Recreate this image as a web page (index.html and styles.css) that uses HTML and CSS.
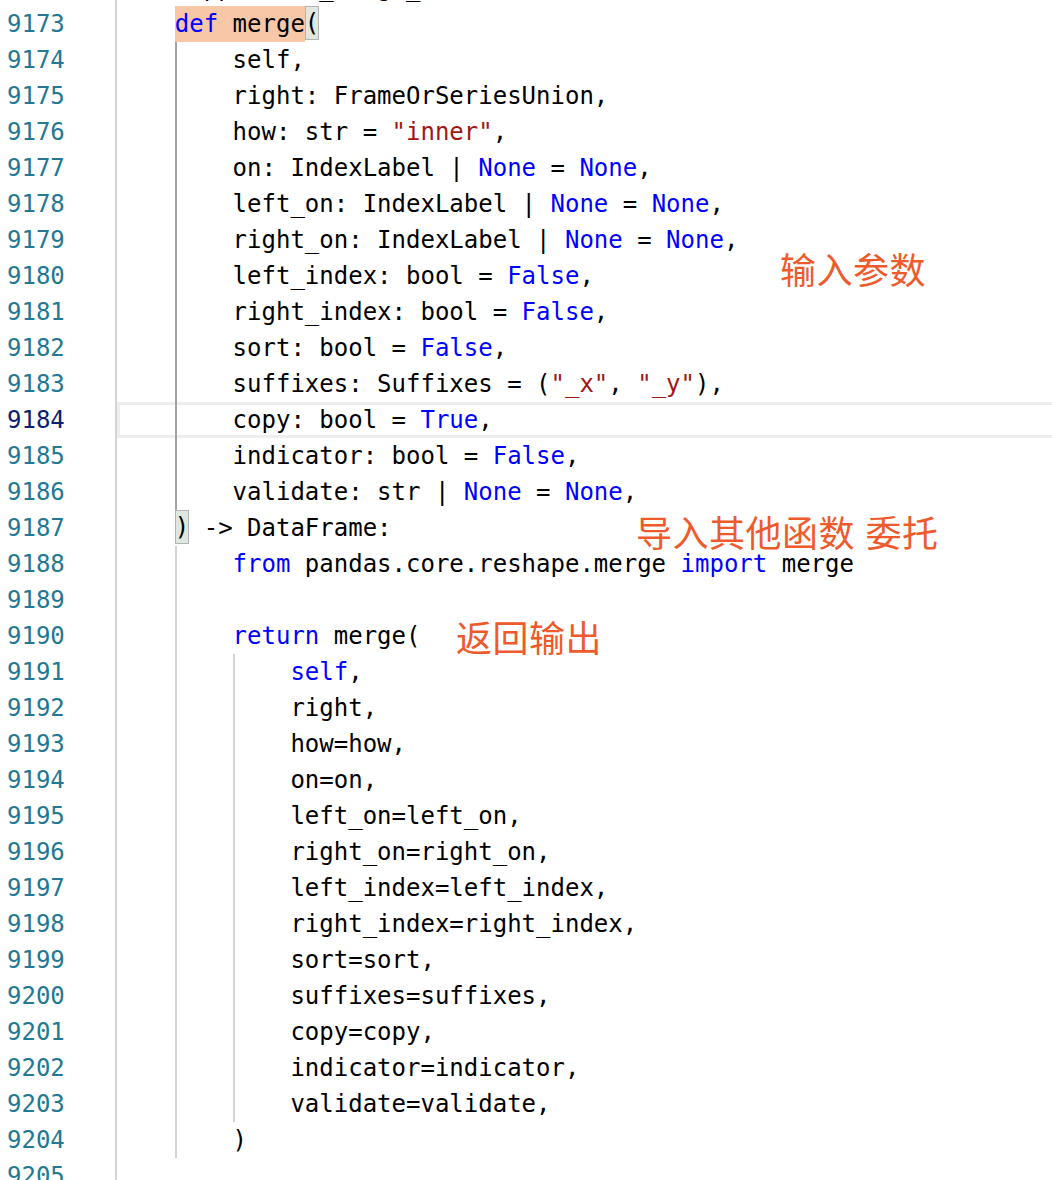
FILE: index.html
```html
<!DOCTYPE html>
<html lang="zh">
<head>
    <meta charset="UTF-8">
    <meta name="viewport" content="width=device-width, initial-scale=1.0">
    <title>merge</title>
    <link rel="stylesheet" href="styles.css">
</head>
<body>

<div class="screen">
    <div class="editor">
        <div class="line"><div class="num">9172</div><div class="code"><span class="ind"></span>@Appender(_merge_doc, indents=2)</div></div>
        <div class="line"><div class="num">9173</div><div class="code"><span class="ind"></span><span class="match"><span class="kw">def</span> merge</span><span class="bracket">(</span></div></div>
        <div class="line"><div class="num">9174</div><div class="code"><span class="ind"></span><span class="ind active"></span>self,</div></div>
        <div class="line"><div class="num">9175</div><div class="code"><span class="ind"></span><span class="ind active"></span>right: FrameOrSeriesUnion,</div></div>
        <div class="line"><div class="num">9176</div><div class="code"><span class="ind"></span><span class="ind active"></span>how: str = <span class="str">"inner"</span>,</div></div>
        <div class="line"><div class="num">9177</div><div class="code"><span class="ind"></span><span class="ind active"></span>on: IndexLabel | <span class="kw">None</span> = <span class="kw">None</span>,</div></div>
        <div class="line"><div class="num">9178</div><div class="code"><span class="ind"></span><span class="ind active"></span>left_on: IndexLabel | <span class="kw">None</span> = <span class="kw">None</span>,</div></div>
        <div class="line"><div class="num">9179</div><div class="code"><span class="ind"></span><span class="ind active"></span>right_on: IndexLabel | <span class="kw">None</span> = <span class="kw">None</span>,</div></div>
        <div class="line"><div class="num">9180</div><div class="code"><span class="ind"></span><span class="ind active"></span>left_index: bool = <span class="kw">False</span>,</div></div>
        <div class="line"><div class="num">9181</div><div class="code"><span class="ind"></span><span class="ind active"></span>right_index: bool = <span class="kw">False</span>,</div></div>
        <div class="line"><div class="num">9182</div><div class="code"><span class="ind"></span><span class="ind active"></span>sort: bool = <span class="kw">False</span>,</div></div>
        <div class="line"><div class="num">9183</div><div class="code"><span class="ind"></span><span class="ind active"></span>suffixes: Suffixes = (<span class="str">"_x"</span>, <span class="str">"_y"</span>),</div></div>
        <div class="line current"><div class="num">9184</div><div class="code"><span class="ind"></span><span class="ind active"></span>copy: bool = <span class="kw">True</span>,</div></div>
        <div class="line"><div class="num">9185</div><div class="code"><span class="ind"></span><span class="ind active"></span>indicator: bool = <span class="kw">False</span>,</div></div>
        <div class="line"><div class="num">9186</div><div class="code"><span class="ind"></span><span class="ind active"></span>validate: str | <span class="kw">None</span> = <span class="kw">None</span>,</div></div>
        <div class="line"><div class="num">9187</div><div class="code"><span class="ind"></span><span class="bracket">)</span> -&gt; DataFrame:</div></div>
        <div class="line"><div class="num">9188</div><div class="code"><span class="ind"></span><span class="ind guide"></span><span class="kw">from</span> pandas.core.reshape.merge <span class="kw">import</span> merge</div></div>
        <div class="line"><div class="num">9189</div><div class="code"><span class="ind"></span><span class="ind guide"></span></div></div>
        <div class="line"><div class="num">9190</div><div class="code"><span class="ind"></span><span class="ind guide"></span><span class="kw">return</span> merge(</div></div>
        <div class="line"><div class="num">9191</div><div class="code"><span class="ind"></span><span class="ind guide"></span><span class="ind guide"></span><span class="kw">self</span>,</div></div>
        <div class="line"><div class="num">9192</div><div class="code"><span class="ind"></span><span class="ind guide"></span><span class="ind guide"></span>right,</div></div>
        <div class="line"><div class="num">9193</div><div class="code"><span class="ind"></span><span class="ind guide"></span><span class="ind guide"></span>how=how,</div></div>
        <div class="line"><div class="num">9194</div><div class="code"><span class="ind"></span><span class="ind guide"></span><span class="ind guide"></span>on=on,</div></div>
        <div class="line"><div class="num">9195</div><div class="code"><span class="ind"></span><span class="ind guide"></span><span class="ind guide"></span>left_on=left_on,</div></div>
        <div class="line"><div class="num">9196</div><div class="code"><span class="ind"></span><span class="ind guide"></span><span class="ind guide"></span>right_on=right_on,</div></div>
        <div class="line"><div class="num">9197</div><div class="code"><span class="ind"></span><span class="ind guide"></span><span class="ind guide"></span>left_index=left_index,</div></div>
        <div class="line"><div class="num">9198</div><div class="code"><span class="ind"></span><span class="ind guide"></span><span class="ind guide"></span>right_index=right_index,</div></div>
        <div class="line"><div class="num">9199</div><div class="code"><span class="ind"></span><span class="ind guide"></span><span class="ind guide"></span>sort=sort,</div></div>
        <div class="line"><div class="num">9200</div><div class="code"><span class="ind"></span><span class="ind guide"></span><span class="ind guide"></span>suffixes=suffixes,</div></div>
        <div class="line"><div class="num">9201</div><div class="code"><span class="ind"></span><span class="ind guide"></span><span class="ind guide"></span>copy=copy,</div></div>
        <div class="line"><div class="num">9202</div><div class="code"><span class="ind"></span><span class="ind guide"></span><span class="ind guide"></span>indicator=indicator,</div></div>
        <div class="line"><div class="num">9203</div><div class="code"><span class="ind"></span><span class="ind guide"></span><span class="ind guide"></span>validate=validate,</div></div>
        <div class="line"><div class="num">9204</div><div class="code"><span class="ind"></span><span class="ind guide"></span>)</div></div>
        <div class="line"><div class="num">9205</div><div class="code"></div></div>
    </div>

    <div class="note note-params">输入参数</div>
    <div class="note note-import">导入其他函数 委托</div>
    <div class="note note-return">返回输出</div>
</div>

</body>
</html>
```

FILE: styles.css
```css
body {
    margin: 0;
    background: #ffffff;
}
.screen {
    position: relative;
    width: 1052px;
    height: 1180px;
    overflow: hidden;
}
.editor {
    margin-top: -30px;
    font-family: 'DejaVu Sans Mono', 'Liberation Mono', monospace;
    font-size: 24px;
    color: #000000;
}
.line {
    display: flex;
    height: 36px;
    line-height: 36px;
}
.num {
    width: 108px;
    padding-left: 7px;
    border-right: 2px solid #d4d4d4;
    color: #237893;
    flex-shrink: 0;
}
.line.current .num {
    color: #0b216f;
}
.code {
    flex: 1;
    white-space: pre;
}
.line.current .code {
    box-shadow: inset 3px 0 #eeeeee, inset 0 3px #eeeeee, inset 0 -3px #eeeeee;
}
.ind {
    display: inline-block;
    width: 4ch;
    height: 36px;
    vertical-align: top;
}
.ind.active {
    box-shadow: inset 2px 0 #a3a3a3;
}
.ind.guide {
    box-shadow: inset 2px 0 #d3d3d3;
}
.kw {
    color: #0000ff;
}
.str {
    color: #a31515;
}
.match {
    display: inline-block;
    background-color: #f7c7a8;
}
.bracket {
    display: inline-block;
    height: 34px;
    line-height: 34px;
    background-color: #dfe7df;
    box-shadow: inset 0 0 0 1px #b4b4b4;
    vertical-align: top;
}
.note {
    position: absolute;
    font-family: 'Noto Sans CJK SC', sans-serif;
    font-size: 36px;
    line-height: 36px;
    letter-spacing: 0.5px;
    word-spacing: 2px;
    color: #ee5a2c;
    white-space: nowrap;
}
.note-params {
    left: 780px;
    top: 250px;
}
.note-import {
    left: 636px;
    top: 513px;
}
.note-return {
    left: 456px;
    top: 618px;
}
```
